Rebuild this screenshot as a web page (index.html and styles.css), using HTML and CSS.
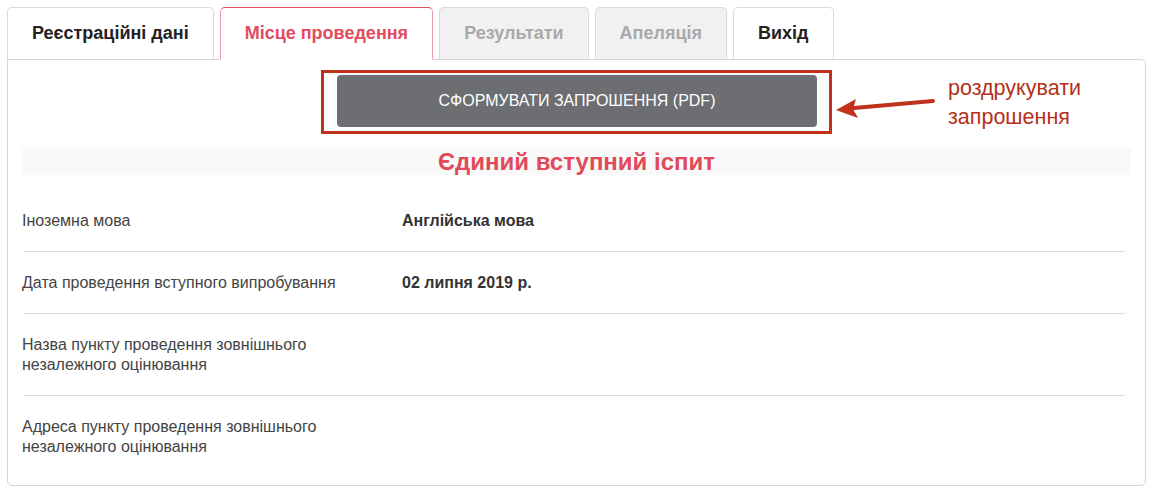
FILE: index.html
```html
<!DOCTYPE html>
<html lang="uk">
<head>
<meta charset="utf-8">
<title>Місце проведення</title>
<link rel="stylesheet" href="styles.css">
</head>
<body>
<div class="page">
  <nav class="tabs">
    <a class="tab">Реєстраційні дані</a>
    <a class="tab tab-active">Місце проведення</a>
    <a class="tab tab-disabled">Результати</a>
    <a class="tab tab-disabled">Апеляція</a>
    <a class="tab">Вихід</a>
  </nav>
  <section class="panel">
    <div class="actions">
      <div class="highlight">
        <button class="btn-pdf">СФОРМУВАТИ ЗАПРОШЕННЯ (PDF)</button>
      </div>
      <div class="note">
        <svg class="note-arrow" width="100" height="24" viewBox="0 0 100 24">
          <path d="M97 5 L18 12" stroke="#c0321b" stroke-width="4" fill="none" stroke-linecap="round"/>
          <path d="M0 14 L20 3 L17 13 L22 22 Z" fill="#c0321b"/>
        </svg>
        <div class="note-text">роздрукувати<br>запрошення</div>
      </div>
    </div>
    <h2 class="section-title">Єдиний вступний іспит</h2>
    <div class="rows">
      <div class="row">
        <div class="label">Іноземна мова</div>
        <div class="value">Англійська мова</div>
      </div>
      <div class="row">
        <div class="label">Дата проведення вступного випробування</div>
        <div class="value">02 липня 2019 р.</div>
      </div>
      <div class="row">
        <div class="label">Назва пункту проведення зовнішнього незалежного оцінювання</div>
        <div class="value"></div>
      </div>
      <div class="row row-last">
        <div class="label">Адреса пункту проведення зовнішнього незалежного оцінювання</div>
        <div class="value"></div>
      </div>
    </div>
  </section>
</div>
</body>
</html>
```

FILE: styles.css
```css
* { box-sizing: border-box; }

body {
  margin: 0;
  background: #ffffff;
  font-family: "Liberation Sans", Arial, sans-serif;
  color: #333333;
}

.page {
  padding: 7px 10px 0 7px;
  width: 1155px;
}

.tabs {
  display: flex;
  gap: 6px;
  position: relative;
  z-index: 2;
}

.tab {
  display: flex;
  align-items: center;
  height: 53px;
  padding: 0 24px 1px;
  border: 1px solid #dadada;
  border-bottom: 1px solid #d5d5d5;
  border-radius: 5px 5px 0 0;
  background: #ffffff;
  font-size: 18px;
  font-weight: bold;
  color: #222222;
  text-decoration: none;
}

.tab-active {
  border-color: #e8a0a8;
  border-top-color: #e04a5c;
  border-bottom-color: #ffffff;
  color: #e14d5e;
}

.tab-disabled {
  background: #f1f1f1;
  color: #a9a9a9;
}

.panel {
  margin-top: -1px;
  width: 1139px;
  height: 427px;
  border: 1px solid #d5d5d5;
  border-radius: 0 5px 5px 5px;
  position: relative;
  z-index: 1;
}

.actions {
  display: flex;
  justify-content: center;
  padding-top: 10px;
  position: relative;
}

.highlight {
  border: 3px solid #c0321b;
  padding: 2px 12px 4px 13px;
}

.btn-pdf {
  display: block;
  width: 480px;
  height: 52px;
  border: none;
  border-radius: 4px;
  background: #6d6e71;
  color: #ffffff;
  font-family: "Liberation Sans", Arial, sans-serif;
  font-size: 16px;
}

.note {
  position: absolute;
  left: 828px;
  top: 14px;
  display: flex;
  align-items: flex-start;
  gap: 12px;
}

.note-arrow {
  margin-top: 22px;
}

.note-text {
  font-size: 21.5px;
  line-height: 29px;
  color: #b5301a;
}

.section-title {
  margin: 14px 14px 0;
  height: 27px;
  background: #f9f9f9;
  font-size: 24px;
  line-height: 27px;
  font-weight: bold;
  text-align: center;
  color: #e14a5b;
}

.rows {
  margin: 15px 20px 0 16px;
}

.row {
  display: flex;
  padding: 21px 0 20px;
  border-bottom: 1px solid #dcdcdc;
  font-size: 16px;
  line-height: 20px;
}

.row-last {
  border-bottom: none;
}

.label {
  width: 340px;
  margin-left: -2px;
  color: #444444;
}

.value {
  margin-left: 40px;
  font-weight: bold;
  color: #333333;
}
```
